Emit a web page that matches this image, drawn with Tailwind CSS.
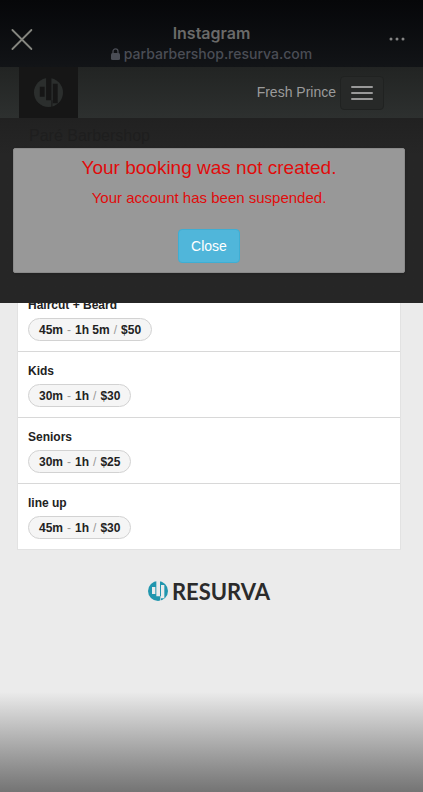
<!DOCTYPE html>
<html lang="en">
<head>
  <meta charset="UTF-8">
  <meta name="viewport" content="width=device-width, initial-scale=1.0">
  <title>Paré Barbershop - Resurva</title>
  <script src="https://cdn.jsdelivr.net/npm/@tailwindcss/browser@4"></script>
</head>
<body class="min-h-screen flex flex-col bg-[#ebebeb] font-['Liberation_Sans',Arial,sans-serif] text-[#222]">
  <!-- in-app browser bar -->
  <header class="flex items-start justify-between h-[67px] px-[10px] bg-linear-to-b from-[#060709] to-[#121417] font-[Inter,sans-serif]">
    <button type="button" aria-label="Close browser" class="mt-[27px] w-12">
      <svg class="w-6 h-6" viewBox="0 0 24 24" fill="none" stroke="#85867f" stroke-width="1.8" stroke-linecap="round"><path d="M2.400 3 21.400 22M21.400 3 2.400 22"/></svg>
    </button>
    <div class="mt-[23px] text-center">
      <p class="text-[16px] leading-5 font-semibold text-[#6a6a69]">Instagram</p>
      <p class="flex items-center justify-center gap-1 text-[14px] leading-[22px] font-medium text-[#4a4d55]">
        <svg class="w-[9px] h-3" viewBox="0 0 9 12" aria-hidden="true"><rect y="5" width="9" height="7" rx="1.5" fill="#4a4d55"/><path d="M2 6V3.400a2.500 2.500 0 0 1 5 0V6" fill="none" stroke="#4a4d55" stroke-width="1.3"/></svg>
        parbarbershop.resurva.com
      </p>
    </div>
    <button type="button" aria-label="More" class="mt-[37px] w-12 pr-2 flex justify-end">
      <svg class="w-4 h-1" viewBox="0 0 16 4" fill="#858585"><circle cx="2" cy="2" r="1.5"/><circle cx="8" cy="2" r="1.5"/><circle cx="14" cy="2" r="1.5"/></svg>
    </button>
  </header>

  <nav class="flex items-center h-[51px] pl-[19px] pr-[39px] bg-linear-to-b from-[#222423] to-[#2d302f]">
    <a href="#" aria-label="Resurva" class="flex items-center justify-center w-[59px] h-full bg-[#161616]">
      <svg class="w-[29px] h-[29px]" viewBox="0 0 30 30"><circle cx="15" cy="15" r="15" fill="#2b2e2d"/><path d="M6 9h5v10.500H6zM12.500 0h5.500v23h-5.500zM19.500 6h5v20h-5zM18 23h1v7h-1z" fill="#161616"/></svg>
    </a>
    <span class="ml-auto text-[14px] text-[#9b9b9b]">Fresh Prince</span>
    <button type="button" aria-label="Menu" class="ml-1 flex flex-col items-center justify-center gap-1 w-11 h-[34px] rounded border border-[#202221] bg-[#272928]">
      <span class="w-[22px] h-[2px] rounded bg-[#999]"></span>
      <span class="w-[22px] h-[2px] rounded bg-[#999]"></span>
      <span class="w-[22px] h-[2px] rounded bg-[#999]"></span>
    </button>
  </nav>

  <!-- booking alert, covers the top of the service list -->
  <div class="relative z-10 bg-linear-to-b from-[#212121] to-[#262626] to-20% pb-[30px]">
    <h1 class="h-[30px] pt-1 pl-[29px] text-[16px] leading-7 text-[#1e1e1e]">Paré Barbershop</h1>
    <div role="alertdialog" aria-labelledby="alert-title" class="ml-[13px] mr-[18px] h-[125px] flex flex-col items-center rounded-xs border border-[#8a8a8a] bg-[#989898] shadow-sm text-[#e00b0b]">
      <h2 id="alert-title" class="mt-1 text-[19px] leading-[30px]">Your booking was not created.</h2>
      <p class="mt-1 text-[15px] leading-[22px]">Your account has been suspended.</p>
      <button type="button" class="mt-5 h-[34px] px-3 rounded border border-[#3eaed3] bg-[#50b6da] text-[14px] text-white">Close</button>
    </div>
  </div>

  <main class="-mt-[17px] ml-[18px] mr-[23px]">
    <ul class="bg-white outline outline-[#e2e2e2] divide-y divide-[#d8d8d8] text-[12px] font-bold">
      <li class="px-[10px] py-[10px]">
        <h3 class="mb-1 leading-[18px]">Haircut + Beard</h3>
        <a href="#" class="inline-flex items-center gap-1 h-[23px] px-[10px] rounded-full border border-[#d2d2d2] bg-[#f5f5f5] align-top">45m <span class="font-normal text-[#999]">-</span> 1h 5m <span class="font-normal text-[#999]">/</span> $50</a>
      </li>
      <li class="px-[10px] py-[10px]">
        <h3 class="mb-1 leading-[18px]">Kids</h3>
        <a href="#" class="inline-flex items-center gap-1 h-[23px] px-[10px] rounded-full border border-[#d2d2d2] bg-[#f5f5f5] align-top">30m <span class="font-normal text-[#999]">-</span> 1h <span class="font-normal text-[#999]">/</span> $30</a>
      </li>
      <li class="px-[10px] py-[10px]">
        <h3 class="mb-1 leading-[18px]">Seniors</h3>
        <a href="#" class="inline-flex items-center gap-1 h-[23px] px-[10px] rounded-full border border-[#d2d2d2] bg-[#f5f5f5] align-top">30m <span class="font-normal text-[#999]">-</span> 1h <span class="font-normal text-[#999]">/</span> $25</a>
      </li>
      <li class="px-[10px] py-[10px]">
        <h3 class="mb-1 leading-[18px]">line up</h3>
        <a href="#" class="inline-flex items-center gap-1 h-[23px] px-[10px] rounded-full border border-[#d2d2d2] bg-[#f5f5f5] align-top">45m <span class="font-normal text-[#999]">-</span> 1h <span class="font-normal text-[#999]">/</span> $30</a>
      </li>
    </ul>
    <a href="#" class="mt-[30px] flex items-center justify-center gap-1 h-6 font-[Lato,sans-serif] text-[22px] font-bold text-[#2b2b2b]">
      <svg class="w-5 h-5" viewBox="0 0 30 30" aria-hidden="true"><circle cx="15" cy="15" r="15" fill="#2196ae"/><path d="M6 9h5v10.500H6zM12.500 0h5.500v23h-5.500zM19.500 6h5v20h-5zM18 23h1v7h-1z" fill="#ebebeb"/></svg>
      RESURVA
    </a>
  </main>

  <footer class="mt-auto h-[100px] bg-linear-to-b from-[#ebebeb] to-[#747474]"></footer>
</body>
</html>
